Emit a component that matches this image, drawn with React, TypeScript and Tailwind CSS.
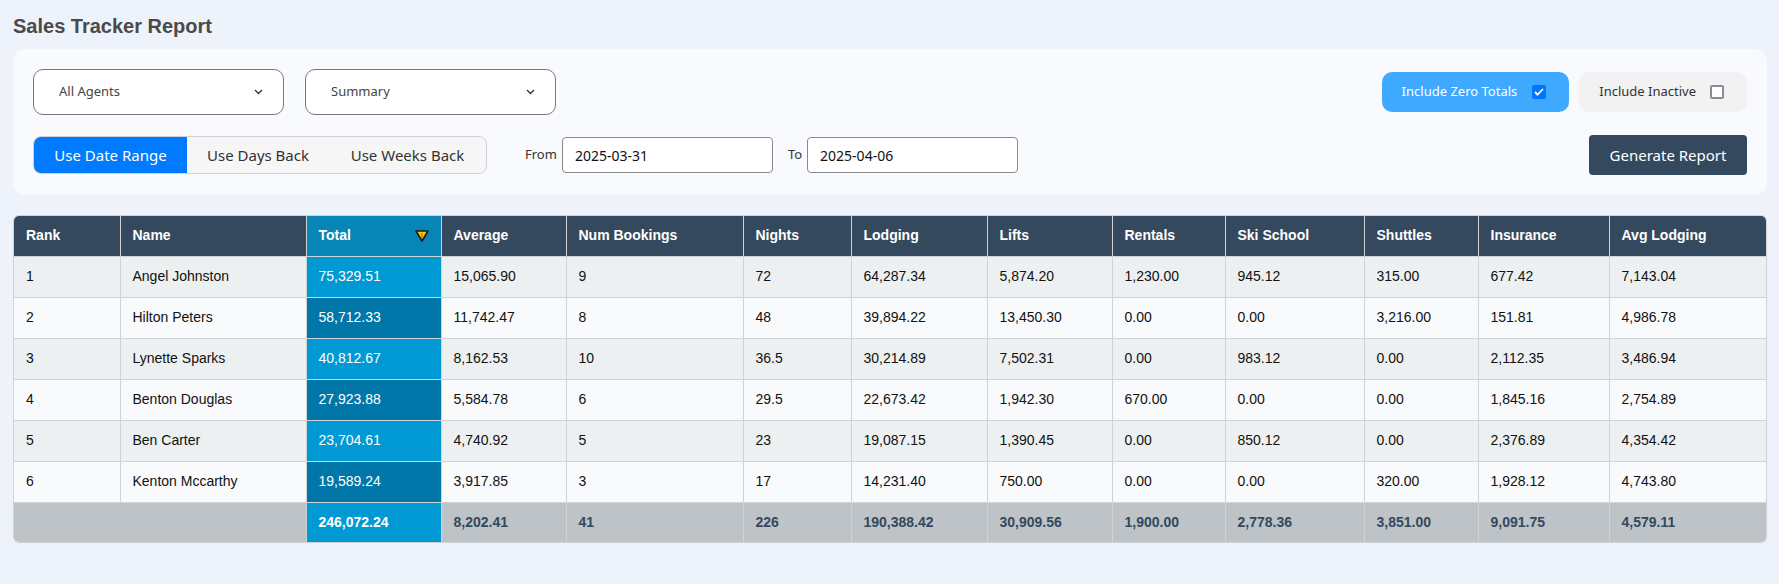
import React from "react";

const cols = [106, 186, 135, 125, 177, 108, 136, 125, 113, 139, 114, 131, 157];
const heads = ["Rank", "Name", "Total", "Average", "Num Bookings", "Nights", "Lodging", "Lifts", "Rentals", "Ski School", "Shuttles", "Insurance", "Avg Lodging"];

const rows: string[][] = [
  ["1", "Angel Johnston", "75,329.51", "15,065.90", "9", "72", "64,287.34", "5,874.20", "1,230.00", "945.12", "315.00", "677.42", "7,143.04"],
  ["2", "Hilton Peters", "58,712.33", "11,742.47", "8", "48", "39,894.22", "13,450.30", "0.00", "0.00", "3,216.00", "151.81", "4,986.78"],
  ["3", "Lynette Sparks", "40,812.67", "8,162.53", "10", "36.5", "30,214.89", "7,502.31", "0.00", "983.12", "0.00", "2,112.35", "3,486.94"],
  ["4", "Benton Douglas", "27,923.88", "5,584.78", "6", "29.5", "22,673.42", "1,942.30", "670.00", "0.00", "0.00", "1,845.16", "2,754.89"],
  ["5", "Ben Carter", "23,704.61", "4,740.92", "5", "23", "19,087.15", "1,390.45", "0.00", "850.12", "0.00", "2,376.89", "4,354.42"],
  ["6", "Kenton Mccarthy", "19,589.24", "3,917.85", "3", "17", "14,231.40", "750.00", "0.00", "0.00", "320.00", "1,928.12", "4,743.80"],
];

const totals = ["246,072.24", "8,202.41", "41", "226", "190,388.42", "30,909.56", "1,900.00", "2,778.36", "3,851.00", "9,091.75", "4,579.11"];

function Chevron() {
  return (
    <svg width="9" height="6" viewBox="0 0 9 6" fill="none">
      <path d="M1 1l3.5 3.5L8 1" stroke="#333" strokeWidth="1.4" />
    </svg>
  );
}

function Select({ label }: { label: string }) {
  return (
    <div className="w-[251px] h-[46px] rounded-[10px] border border-[#7a7a7a] bg-white flex items-center justify-between pl-[25px] pr-[20px]">
      <span className="text-[13px] text-[#444]">{label}</span>
      <Chevron />
    </div>
  );
}

function SortIcon() {
  return (
    <svg width="14" height="12" viewBox="0 0 14 12">
      <polygon points="1,1 13,1 7,11" fill="#f5c518" stroke="#1c1c1c" strokeWidth="1.6" strokeLinejoin="round" />
      <path d="M7 3v5" stroke="#b8860b" strokeWidth="1.4" />
    </svg>
  );
}

export default function App() {
  return (
    <div className="min-h-screen bg-[#eef2fa] pl-[13px] pr-[12px] pt-[14px] pb-10 font-['Noto_Sans',sans-serif]">
      <h1 className="text-[20px] leading-6 font-bold text-[#4a4a4a] font-['Liberation_Sans',Arial,sans-serif] mb-[11px]">
        Sales Tracker Report
      </h1>

      <div className="rounded-xl bg-[#f8fafd] p-5 flex flex-col gap-5">
        <div className="flex items-center justify-between">
          <div className="flex gap-[21px]">
            <Select label="All Agents" />
            <Select label="Summary" />
          </div>
          <div className="flex gap-[10px]">
            <div className="h-10 rounded-[10px] bg-[#3fa9ff] flex items-center pl-5 pr-[23px] gap-[15px]">
              <span className="text-[13px] text-white">Include Zero Totals</span>
              <span className="w-[14px] h-[14px] rounded-[2px] bg-[#0075ff] flex items-center justify-center">
                <svg width="10" height="8" viewBox="0 0 10 8" fill="none">
                  <path d="M1 4l2.6 2.6L9 1" stroke="white" strokeWidth="1.8" />
                </svg>
              </span>
            </div>
            <div className="h-10 rounded-[10px] bg-[#f2f2f2] flex items-center pl-5 pr-[23px] gap-[14px]">
              <span className="text-[13px] text-[#333]">Include Inactive</span>
              <span className="w-[14px] h-[14px] rounded-[2px] border-2 border-[#8b8b9b] bg-white" />
            </div>
          </div>
        </div>

        <div className="flex items-center justify-between h-10">
          <div className="flex items-center">
            <div className="flex h-[38px] rounded-lg border border-[#d0d0d0] bg-[#f6f6f6] overflow-hidden text-[15px]">
              <span className="bg-[#007bff] text-white w-[153px] flex items-center justify-center">Use Date Range</span>
              <span className="text-[#333] w-[142px] flex items-center justify-center">Use Days Back</span>
              <span className="text-[#333] w-[157px] flex items-center justify-center">Use Weeks Back</span>
            </div>
            <span className="ml-[38px] text-[13px] text-[#333]">From</span>
            <div className="ml-[5px] w-[211px] h-9 rounded border border-[#8a8a8a] bg-white flex items-center px-3 text-[14px] text-[#111]">
              2025-03-31
            </div>
            <span className="ml-[15px] text-[13px] text-[#333]">To</span>
            <div className="ml-[5px] w-[211px] h-9 rounded border border-[#8a8a8a] bg-white flex items-center px-3 text-[14px] text-[#111]">
              2025-04-06
            </div>
          </div>
          <div className="h-10 w-[158px] rounded-[4px] bg-[#34495e] text-white text-[15px] flex items-center justify-center">
            Generate Report
          </div>
        </div>
      </div>

      <div className="mt-5 w-[1754px] rounded-[6px] border border-[#cfd3d6] overflow-hidden font-['Liberation_Sans',Arial,sans-serif] text-[14px]">
        <table className="w-full table-fixed border-collapse">
          <colgroup>
            {cols.map((w, i) => (
              <col key={i} style={{ width: w }} />
            ))}
          </colgroup>
          <thead>
            <tr className="h-10">
              {heads.map((h, i) => (
                <th
                  key={h}
                  className={
                    "text-left font-bold text-white px-3 border-b border-[#cfd3d6] " +
                    (i < heads.length - 1 ? "border-r " : "") +
                    (i === 2 ? "bg-[#0785b7]" : "bg-[#34495e]")
                  }
                >
                  {i === 2 ? (
                    <div className="flex items-center justify-between">
                      <span>{h}</span>
                      <SortIcon />
                    </div>
                  ) : (
                    h
                  )}
                </th>
              ))}
            </tr>
          </thead>
          <tbody>
            {rows.map((r, ri) => (
              <tr key={ri} className={"h-[41px] " + (ri % 2 === 0 ? "bg-[#ecf0f1]" : "bg-[#f9fafc]")}>
                {r.map((c, ci) => (
                  <td
                    key={ci}
                    className={
                      "px-3 text-[#111] border-b border-[#cfd3d6] " +
                      (ci < r.length - 1 ? "border-r " : "") +
                      (ci === 2 ? (ri % 2 === 0 ? "bg-[#0099d4] text-white" : "bg-[#0077a8] text-white") : "")
                    }
                  >
                    {c}
                  </td>
                ))}
              </tr>
            ))}
            <tr className="h-10 bg-[#bdc3c7] font-bold text-[#34495e]">
              <td colSpan={2} className="border-r border-[#cfd3d6]" />
              {totals.map((t, i) => (
                <td
                  key={i}
                  className={
                    "px-3 " +
                    (i < totals.length - 1 ? "border-r border-[#cfd3d6] " : "") +
                    (i === 0 ? "bg-[#0099d4] text-white" : "")
                  }
                >
                  {t}
                </td>
              ))}
            </tr>
          </tbody>
        </table>
      </div>
    </div>
  );
}
